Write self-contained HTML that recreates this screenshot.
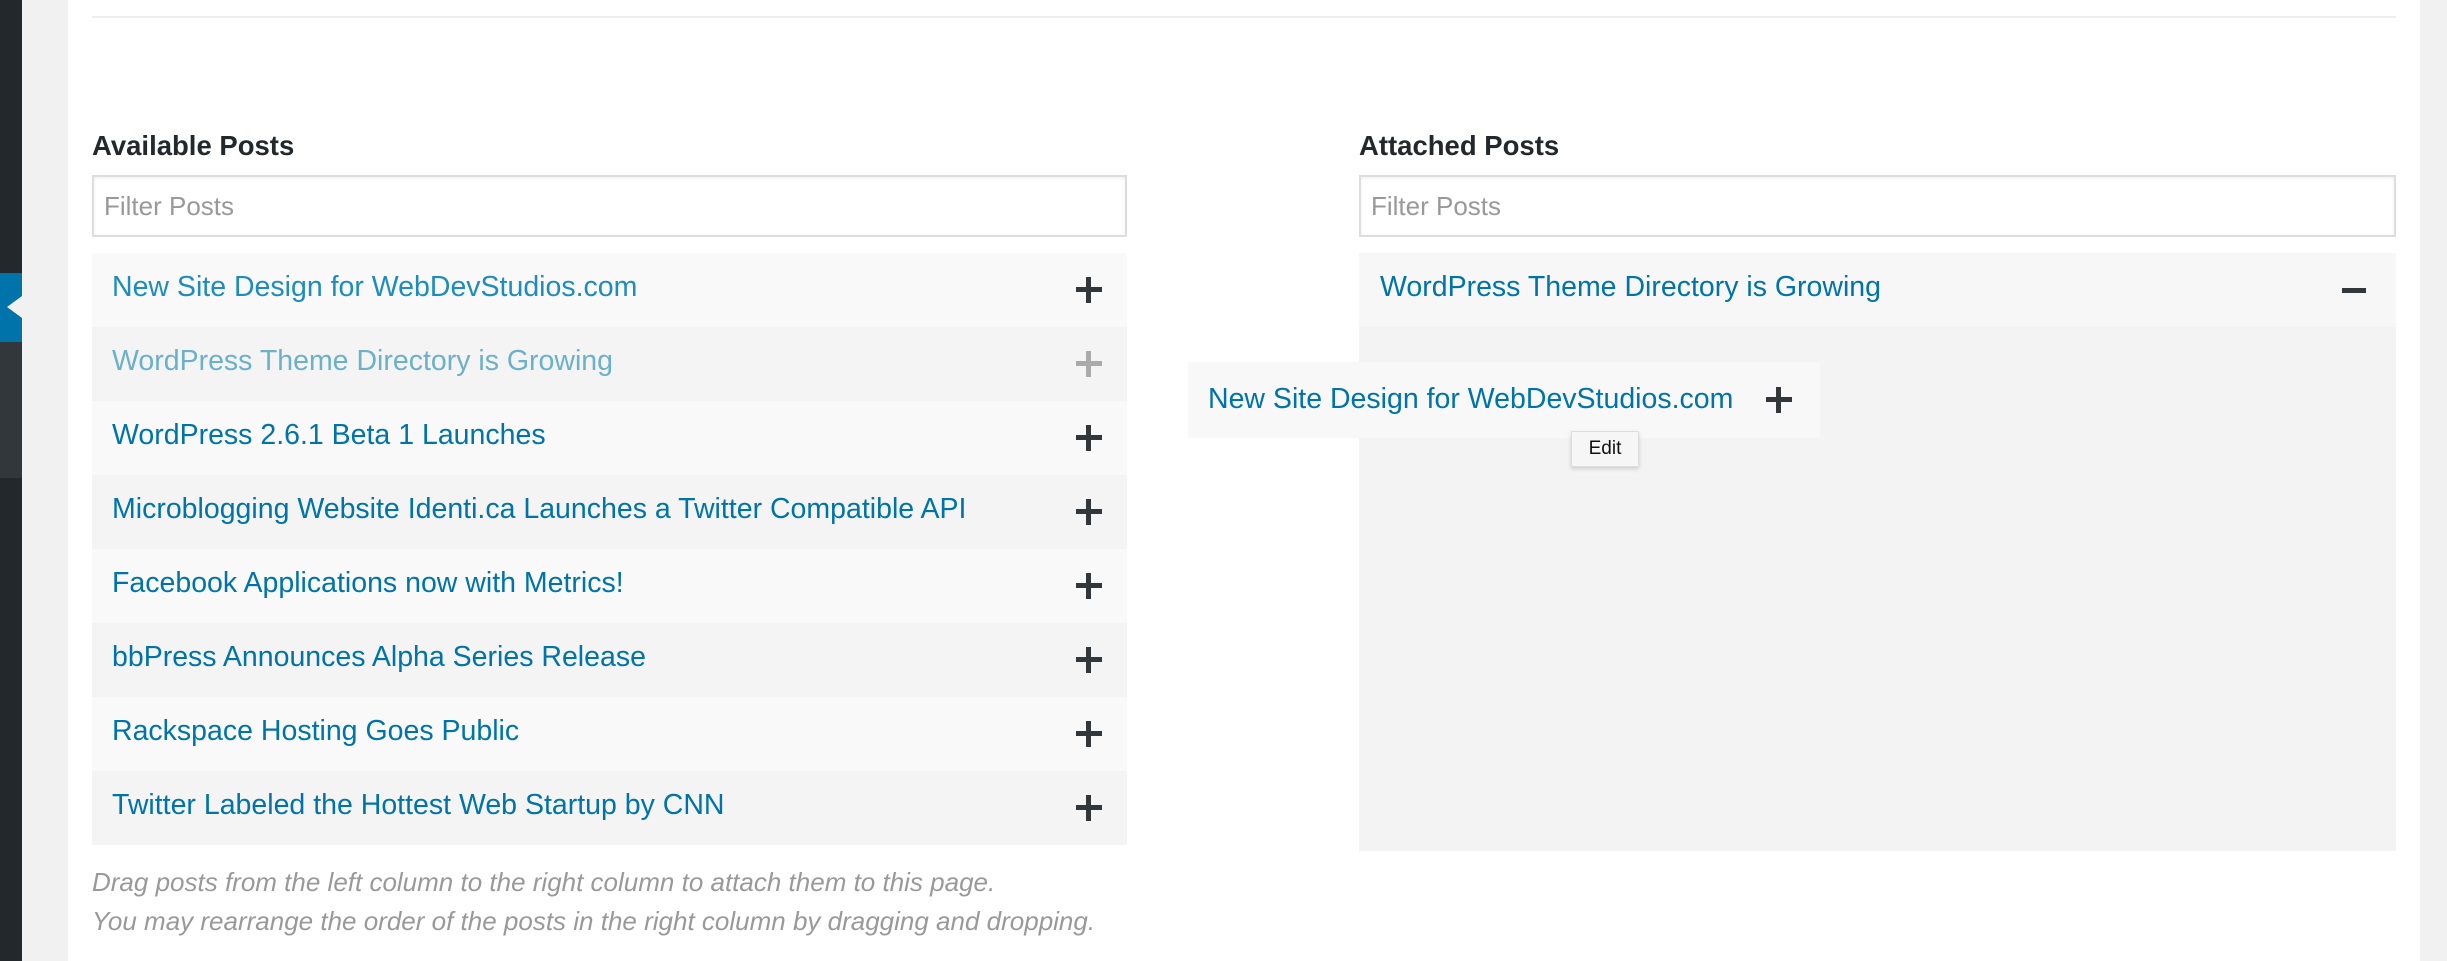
<!DOCTYPE html>
<html><head><meta charset="utf-8"><style>
*{margin:0;padding:0;box-sizing:border-box}
body{width:2447px;height:961px;overflow:hidden;background:#f1f1f1;font-family:"Liberation Sans",sans-serif;position:relative}
.side{position:absolute;left:0;top:0;width:22px;height:961px;background:#23282d}
.side .cur{position:absolute;top:273px;left:0;width:22px;height:69px;background:#0073aa}
.side .sub{position:absolute;top:342px;left:0;width:22px;height:136px;background:#32373c}
.side .arr{position:absolute;top:296px;left:7px;width:0;height:0;border-top:11px solid transparent;border-bottom:11px solid transparent;border-right:15px solid #f1f1f1}
.panel{position:absolute;left:68px;top:0;width:2352px;height:961px;background:#fff}
.hr{position:absolute;left:92px;top:16px;width:2304px;height:2px;background:#eee}
h3{position:absolute;font-size:27.5px;font-weight:bold;color:#23282d;top:130px}
.inp{position:absolute;top:175px;height:62px;border:2px solid #ddd;box-shadow:inset 0 1px 3px rgba(0,0,0,.07);background:#fff;font-size:26px;color:#999;padding:14px 10px}
.list{position:absolute;top:253px}
.row{height:74px;position:relative;font-size:28.5px;color:#0073aa;line-height:68px;padding-left:20px;white-space:nowrap}
.row:nth-child(odd){background:#f9f9f9}.row:nth-child(even){background:#f4f4f4}
.plus{position:absolute;right:25px;top:24px;width:26px;height:26px}
.plus:before{content:"";position:absolute;left:0;top:10px;width:26px;height:5px;background:#32373c}
.plus:after{content:"";position:absolute;left:10px;top:0;width:5px;height:26px;background:#32373c}
.faded{color:#6cb0c9}.faded .plus:before,.faded .plus:after{background:#aaa}
.help{position:absolute;left:92px;font-style:italic;color:#999;font-size:26px;white-space:nowrap}
</style></head><body>
<div class="side"><div class="cur"></div><div class="sub"></div><div class="arr"></div></div>
<div class="panel"></div>
<div class="hr"></div>
<h3 style="left:92px">Available Posts</h3>
<h3 style="left:1359px">Attached Posts</h3>
<div class="inp" style="left:92px;width:1035px">Filter Posts</div>
<div class="inp" style="left:1359px;width:1037px">Filter Posts</div>
<div class="list" style="left:92px;width:1035px">
<div class="row" style="color:#1e8cbe">New Site Design for WebDevStudios.com<span class="plus"></span></div>
<div class="row faded">WordPress Theme Directory is Growing<span class="plus"></span></div>
<div class="row">WordPress 2.6.1 Beta 1 Launches<span class="plus"></span></div>
<div class="row">Microblogging Website Identi.ca Launches a Twitter Compatible API<span class="plus"></span></div>
<div class="row">Facebook Applications now with Metrics!<span class="plus"></span></div>
<div class="row">bbPress Announces Alpha Series Release<span class="plus"></span></div>
<div class="row">Rackspace Hosting Goes Public<span class="plus"></span></div>
<div class="row">Twitter Labeled the Hottest Web Startup by CNN<span class="plus"></span></div>
</div>
<div style="position:absolute;left:1359px;top:253px;width:1037px;height:598px;background:#f3f3f3"></div>
<div class="row" style="position:absolute;left:1359px;top:253px;width:1037px;background:#f7f7f7;padding-left:21px">WordPress Theme Directory is Growing<span style="position:absolute;left:983px;top:35px;width:24px;height:5px;background:#32373c"></span></div>
<div class="row" style="position:absolute;left:1188px;top:362px;width:632px;height:76px;background:#f8f8f8;padding-left:20px;line-height:74px">New Site Design for WebDevStudios.com<span class="plus" style="right:28px;top:25px"></span></div>
<div style="position:absolute;left:1571px;top:431px;width:68px;height:36px;background:#f6f6f6;border:1px solid #ddd;box-shadow:0 2px 4px rgba(0,0,0,.15);font-size:19px;color:#111;text-align:center;line-height:34px">Edit</div>
<div class="help" style="top:867px">Drag posts from the left column to the right column to attach them to this page.</div>
<div class="help" style="top:906px">You may rearrange the order of the posts in the right column by dragging and dropping.</div>
</body></html>
